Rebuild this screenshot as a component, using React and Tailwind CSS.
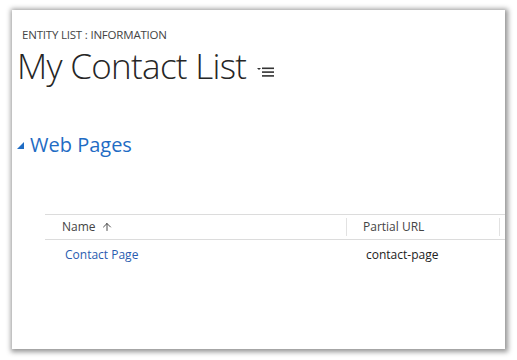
import { ArrowUp } from 'lucide-react';

/**
 * Small list-options glyph next to the title
 */
function ViewMenuIcon() {
  return (
    <svg width="18" height="10" viewBox="0 0 18 10" className="text-[#333]">
      <path d="M0 1 L4 1 L2 3 Z" fill="currentColor" />
      <rect x="5" y="0.5" width="12" height="1.6" fill="currentColor" />
      <rect x="5" y="4.3" width="12" height="1.6" fill="currentColor" />
      <rect x="5" y="8.1" width="12" height="1.6" fill="currentColor" />
    </svg>
  );
}

const rows = [{ name: 'Contact Page', url: 'contact-page' }];

export default function App() {
  return (
    <div
      className="w-[517px] h-[360px] bg-white pt-[10px] pl-[12px]"
      style={{ fontFamily: '"Open Sans", "Noto Sans", sans-serif' }}
    >
      <div className="w-[493px] h-[339px] bg-white shadow-[1px_1px_5px_2px_rgba(0,0,0,0.42)] flex flex-col">
        {/* Header */}
        <div className="pl-[10px] pt-[18px] text-[11.5px] leading-[14px] text-[#444] tracking-[-0.2px]">
          ENTITY LIST : INFORMATION
        </div>
        <div className="flex items-end pl-[5px] mt-[7px]">
          <h1 className="text-[35px] leading-[34px] font-light text-[#262626] tracking-[-0.7px]">
            My Contact List
          </h1>
          <div className="ml-[11px] mb-[6px]">
            <ViewMenuIcon />
          </div>
        </div>

        {/* Section */}
        <div className="flex items-center pl-[5px] mt-[49px]">
          <svg width="7" height="7" viewBox="0 0 7 7" className="text-[#1f6cc4]">
            <path d="M7 0 L7 7 L0 7 Z" fill="currentColor" />
          </svg>
          <h2 className="ml-[6px] text-[20px] leading-[26px] text-[#1f6cc4]">Web Pages</h2>
        </div>

        {/* Grid */}
        <div className="ml-[33px] mt-[56px] text-[12px]">
          <div className="flex items-center h-[26px] border-t border-b border-[#dcdcdc] text-[#444]">
            <div className="w-[302px] h-[18px] flex items-center pl-[17px] gap-[5px] border-r border-[#e2e2e2]">
              Name
              <ArrowUp size={12} strokeWidth={1.75} className="text-[#333]" />
            </div>
            <div className="w-[153px] h-[18px] flex items-center pl-[16px] border-r border-[#e2e2e2]">
              Partial URL
            </div>
          </div>
          {rows.map((row) => (
            <div key={row.url} className="flex items-center h-[30px]">
              <div className="w-[303px] pl-[20px] text-[#2a5cb0]">{row.name}</div>
              <div className="pl-[18px] text-[#222]">{row.url}</div>
            </div>
          ))}
        </div>
      </div>
    </div>
  );
}
